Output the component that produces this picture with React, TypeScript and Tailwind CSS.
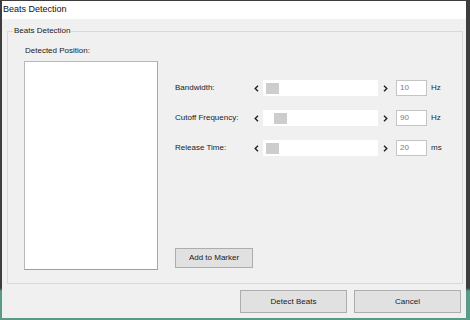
import React from 'react'

const font = { fontFamily: '"Liberation Sans", Arial, sans-serif' }

function Arrow({ dir }: { dir: 'left' | 'right' }) {
  return (
    <svg width="5" height="7" viewBox="0 0 5 7" className="block">
      <path d={dir === 'left' ? 'M4 0.8 L1.2 3.5 L4 6.2' : 'M1 0.8 L3.8 3.5 L1 6.2'} fill="none" stroke="#222" strokeWidth="1.4" />
    </svg>
  )
}

function ScrollBar({ pos }: { pos: number }) {
  return (
    <div className="flex h-[16px] w-[142px] items-stretch">
      <div className="flex w-[13px] items-center justify-center">
        <Arrow dir="left" />
      </div>
      <div className="flex flex-1 items-center bg-white">
        <div className="h-[11px] w-[13px] bg-[#cdcdcd]" style={{ marginLeft: pos }} />
      </div>
      <div className="flex w-[14px] items-center justify-center">
        <Arrow dir="right" />
      </div>
    </div>
  )
}

function ParamRow({ label, pos, value, unit }: { label: string; pos: number; value: string; unit: string }) {
  return (
    <div className="flex h-[16px] items-center">
      <div className="w-[75px] text-[8px] leading-[10px] text-[#1a1a1a]">{label}</div>
      <ScrollBar pos={pos} />
      <div className="ml-[4px] flex h-[16px] w-[31px] items-center border border-[#c4c4c4] bg-white pl-[3px] text-[8px] text-[#7a7a7a]">{value}</div>
      <div className="ml-[4px] text-[8px] text-[#2a2a2a]">{unit}</div>
    </div>
  )
}

export default function App() {
  return (
    <div
      className="h-[320px] w-[470px] overflow-hidden bg-[linear-gradient(to_bottom,#3d3d3d_0,#3d3d3d_90%,#5a9a86_91%,#5a9a86_100%)] pl-[2px] pt-[1px]"
      style={font}
    >
      <div className="flex h-[317px] w-[464px] flex-col bg-[#f0f0f0]">
        <div className="flex h-[18px] items-center bg-white pl-[1px] text-[9px] text-[#111]">Beats Detection</div>

        <div className="flex flex-1 flex-col px-[5px] pt-[12px]">
          <div className="relative flex h-[253px] w-[456px] border border-[#d9d9d9]">
            <span className="absolute left-[5px] top-[-6px] bg-[#f0f0f0] px-[1px] text-[8px] leading-[10px] text-[#1a1a1a]">Beats Detection</span>

            <div className="flex flex-col pl-[16px] pt-[14px]">
              <div className="pl-[1px] text-[8px] leading-[10px] text-[#1a1a1a]">Detected Position:</div>
              <div className="mt-[5px] h-[209px] w-[134px] border border-[#b8b8b8] border-b-[#9e9e9e] border-r-[#a8a8a8] bg-white" />
            </div>

            <div className="ml-[17px] flex flex-1 flex-col pb-[15px] pt-[48px]">
              <div className="flex flex-col gap-[14px]">
                <ParamRow label="Bandwidth:" pos={3} value="10" unit="Hz" />
                <ParamRow label="Cutoff Frequency:" pos={11} value="90" unit="Hz" />
                <ParamRow label="Release Time:" pos={3} value="20" unit="ms" />
              </div>
              <button className="mt-auto flex h-[20px] w-[78px] items-center justify-center border border-[#adadad] bg-[#e1e1e1] text-[8px] text-[#1a1a1a]">
                Add to Marker
              </button>
            </div>
          </div>

          <div className="mt-[6px] flex justify-end gap-[7px] pr-[-1px]">
            <button className="flex h-[23px] w-[107px] items-center justify-center border border-[#adadad] bg-[#e1e1e1] text-[8px] text-[#1a1a1a]">
              Detect Beats
            </button>
            <button className="flex h-[23px] w-[107px] items-center justify-center border border-[#adadad] bg-[#e1e1e1] text-[8px] text-[#1a1a1a]">
              Cancel
            </button>
          </div>
        </div>
      </div>
    </div>
  )
}
